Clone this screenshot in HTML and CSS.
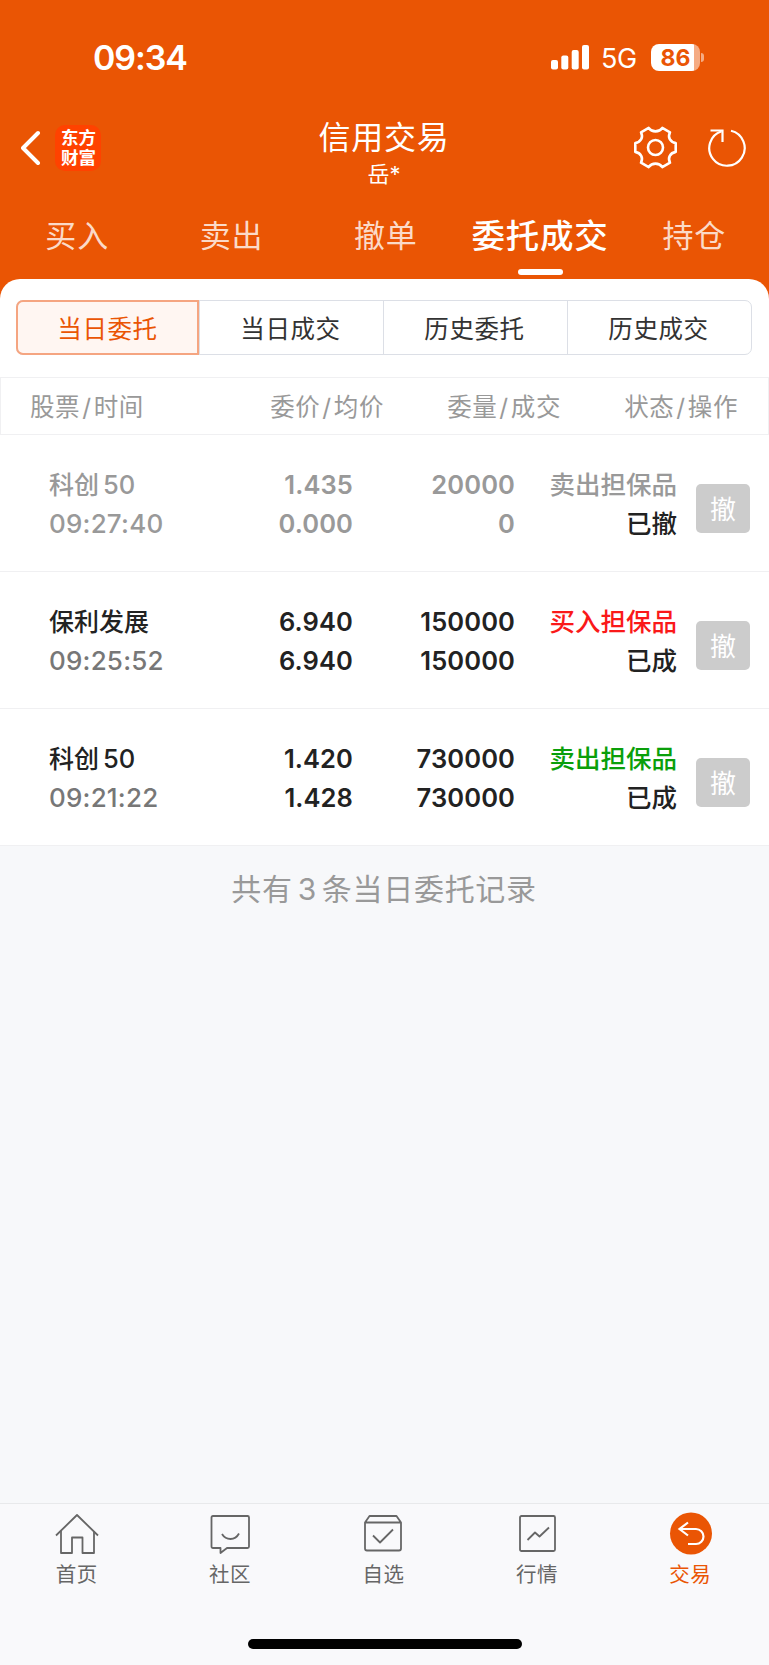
FILE: index.html
```
<!DOCTYPE html>
<html lang="zh-CN">
<head>
<meta charset="UTF-8">
<meta name="viewport" content="width=device-width, initial-scale=1">
<title>信用交易</title>
<link rel="stylesheet" href="styles.css">
</head>
<body>

<header class="header">
  <div class="status-bar">
    <span class="time">09:34</span>
    <div class="status-icons">
      <svg class="signal" width="38" height="25" viewBox="0 0 38 25" fill="#fff">
        <rect x="0" y="15" width="7" height="9.5" rx="2"/>
        <rect x="10.3" y="10.5" width="7" height="14" rx="2"/>
        <rect x="20.7" y="5" width="7" height="19.5" rx="2"/>
        <rect x="31" y="0" width="7" height="24.5" rx="2"/>
      </svg>
      <span class="network">5G</span>
      <div class="battery">86</div>
      <span class="battery-cap"></span>
    </div>
  </div>

  <div class="navbar">
    <div class="nav-left">
      <svg width="20" height="36" viewBox="0 0 20 36" fill="none" stroke="#fff" stroke-width="4" stroke-linecap="round" stroke-linejoin="round">
        <path d="M17 3 L2 18 L17 33"/>
      </svg>
      <div class="logo">东方<br>财富</div>
    </div>
    <div class="nav-title">
      <h1>信用交易</h1>
      <p>岳*</p>
    </div>
    <div class="nav-right">
      <svg width="46" height="46" viewBox="-22.5 -22.5 46 46" fill="none" stroke="#fff" stroke-width="2.6" stroke-linejoin="round">
        <path d="M20.2 -4.4 V4.4 C14.5 5.5 12 10 14.500 15.200 L6.800 19.600 C3.500 15 -3.500 15 -6.800 19.600 L-14.500 15.200 C-12 10 -14.500 5.500 -20.200 4.400 V-4.400 C-14.500 -5.500 -12 -10 -14.500 -15.200 L-6.800 -19.600 C-3.500 -15 3.500 -15 6.800 -19.600 L14.500 -15.200 C12 -10 14.500 -5.500 20.200 -4.400 Z"/>
        <circle r="7.5"/>
      </svg>
      <svg width="40" height="42" viewBox="-20 -21 40 42" fill="none" stroke="#fff" stroke-width="2.2">
        <path d="M4 -17.2 A17.7 17.7 0 1 1 -5.5 -16.8"/>
        <path d="M-16.5 -17.5 H-4.5 V-6"/>
      </svg>
    </div>
  </div>

  <nav class="tabs">
    <a>买入</a>
    <a>卖出</a>
    <a>撤单</a>
    <a class="active">委托成交</a>
    <a>持仓</a>
  </nav>
</header>

<main class="content">
  <section class="panel">
    <div class="segments">
      <a class="selected">当日委托</a>
      <a>当日成交</a>
      <a>历史委托</a>
      <a>历史成交</a>
    </div>

    <div class="table-head">
      <span>股票<i>/</i>时间</span>
      <span>委价<i>/</i>均价</span>
      <span>委量<i>/</i>成交</span>
      <span>状态<i>/</i>操作</span>
    </div>

    <div class="order cancelled">
      <div class="stock"><b>科创<em>50</em></b><span class="clock">09:27:40</span></div>
      <div class="num">1.435<br>0.000</div>
      <div class="num">20000<br>0</div>
      <div class="state">卖出担保品<br><span>已撤</span></div>
      <button>撤</button>
    </div>

    <div class="order">
      <div class="stock"><b>保利发展</b><span class="clock">09:25:52</span></div>
      <div class="num">6.940<br>6.940</div>
      <div class="num">150000<br>150000</div>
      <div class="state buy">买入担保品<br><span>已成</span></div>
      <button>撤</button>
    </div>

    <div class="order">
      <div class="stock"><b>科创<em>50</em></b><span class="clock">09:21:22</span></div>
      <div class="num">1.420<br>1.428</div>
      <div class="num">730000<br>730000</div>
      <div class="state sell">卖出担保品<br><span>已成</span></div>
      <button>撤</button>
    </div>
  </section>

  <p class="summary">共有<em>3</em>条当日委托记录</p>
</main>

<footer class="footer">
  <nav class="tabbar">
    <a>
      <svg viewBox="0 0 44 44">
        <path d="M1 23.5 L22 3 L43 23.5"/>
        <path d="M6 19 V41 H17 V25.5 H27.5 V41 H39 V19"/>
      </svg>
      首页
    </a>
    <a>
      <svg viewBox="0 0 44 44">
        <path d="M5 4 H39.5 Q41 4 41 5.5 V34.5 Q41 36 39.5 36 H19 L12.5 41 V36 H5 Q3.5 36 3.5 34.5 V5.5 Q3.5 4 5 4 Z"/>
        <path d="M14 22 Q17 27 22.5 27 T31 21.5"/>
      </svg>
      社区
    </a>
    <a>
      <svg viewBox="0 0 44 44">
        <path d="M4 10.5 L8.5 4 H35.5 L40 10.5 V36.5 Q40 38.5 38 38.5 H6 Q4 38.5 4 36.5 Z M4 10.5 H40"/>
        <path d="M12 23.5 L19 30.5 L32 17.5"/>
      </svg>
      自选
    </a>
    <a>
      <svg viewBox="0 0 44 44">
        <rect x="5" y="4" width="35" height="35" rx="1.5"/>
        <path d="M12.5 28 L20 20.5 L24.5 24.5 L34 15.5"/>
      </svg>
      行情
    </a>
    <a class="current">
      <svg viewBox="0 0 44 44">
        <circle cx="23" cy="21.5" r="21"/>
        <path d="M20 10.5 L11.5 17 L20 23.5 M11.5 17 H28 A7.5 7.5 0 0 1 28 32 H20"/>
      </svg>
      交易
    </a>
  </nav>
  <div class="home-indicator"></div>
</footer>

</body>
</html>
```
FILE: styles.css
```
* {
  box-sizing: border-box;
}

body {
  margin: 0;
  width: 769px;
  height: 1665px;
  display: flex;
  flex-direction: column;
  font-family: Inter, "Noto Sans CJK SC", sans-serif;
  background: #f7f8fa;
  color: #222;
  overflow: hidden;
}

h1,
p {
  margin: 0;
  font-weight: 400;
}

i,
em {
  font-style: normal;
}

svg {
  display: block;
  flex: none;
}

/* Header */
.header {
  height: 299px;
  flex: none;
  background: #ea5504;
  color: #fff;
}

.status-bar {
  height: 115px;
  padding: 0 65px 0 93px;
  display: flex;
  justify-content: space-between;
  align-items: center;
}

.time {
  font-size: 34px;
  font-weight: 600;
  letter-spacing: -1.1px;
}

.status-icons {
  display: flex;
  align-items: center;
}

.network {
  margin-left: 12px;
  width: 38px;
  padding-top: 1px;
  font-size: 27px;
  letter-spacing: -0.3px;
}

.battery {
  width: 49px;
  height: 27px;
  margin-left: 12px;
  border-radius: 8px;
  background: linear-gradient(to right, #fff 43px, #f5ab83 43px);
  color: #ea5504;
  font-size: 23px;
  font-weight: 700;
  line-height: 28px;
  text-align: center;
}

.battery-cap {
  width: 3px;
  height: 9px;
  margin-left: 1px;
  border-radius: 0 4px 4px 0;
  background: #f5ab83;
}

.navbar {
  height: 85px;
  padding: 1px 22px 0 21px;
  display: grid;
  grid-template-columns: 1fr auto 1fr;
}

.nav-left,
.nav-right {
  height: 64px;
  display: flex;
  align-items: center;
}

.nav-left {
  gap: 14px;
}

.nav-right {
  justify-content: flex-end;
  gap: 28px;
}

.logo {
  width: 46px;
  height: 46px;
  padding: 3px 0 0 1px;
  border-radius: 10px;
  background: #ff4200;
  font-size: 17.5px;
  font-weight: 700;
  line-height: 20px;
  text-align: center;
}

.nav-title {
  text-align: center;
}

.nav-title h1 {
  font-size: 32px;
  line-height: 44px;
  letter-spacing: 0.7px;
}

.nav-title p {
  font-size: 22px;
  line-height: 29px;
}

.tabs {
  display: grid;
  grid-template-columns: repeat(5, 154.3px);
  height: 79px;
}

.tabs a {
  display: flex;
  flex-direction: column;
  align-items: center;
  font-size: 31px;
  line-height: 72px;
  letter-spacing: 0.8px;
  white-space: nowrap;
  color: #fbdac8;
}

.tabs .active {
  font-size: 33.5px;
  font-weight: 500;
  color: #fff;
}

.tabs .active::after {
  content: "";
  width: 45px;
  height: 6px;
  margin-top: -3px;
  border-radius: 3px;
  background: #fff;
}

/* Orders */
.content {
  flex: 1;
  margin-top: -20px;
}

.panel {
  background: #fff;
  border-radius: 20px 20px 0 0;
  padding-top: 21px;
}

.segments {
  height: 55px;
  margin: 0 17px 22px 16px;
  display: grid;
  grid-template-columns: 182px 184px 184px 1fr;
  border: 1px solid #dcdfe6;
  border-radius: 7px;
}

.segments a {
  height: 53px;
  padding-right: 2px;
  border-left: 1px solid #dcdfe6;
  font-size: 24.5px;
  line-height: 56px;
  letter-spacing: 0.6px;
  text-align: center;
  color: #333;
}

.segments .selected {
  height: 55px;
  margin: -1px 0 -1px -1px;
  padding-right: 0;
  border: 2px solid #f5a581;
  border-radius: 7px 0 0 7px;
  background: #fff6f2;
  color: #ea5504;
  line-height: 54px;
}

.table-head {
  height: 58px;
  padding: 0 30px 0 29px;
  display: grid;
  grid-template-columns: 114px 240px 177px 1fr;
  border: 1px solid #f0f0f2;
  font-size: 24.5px;
  line-height: 58px;
  letter-spacing: 0.6px;
  text-align: right;
  white-space: nowrap;
  color: #999;
}

.table-head span:first-child {
  text-align: left;
}

.table-head i {
  margin: 0 2px;
}

.order {
  height: 137px;
  padding: 2px 19px 0 49px;
  display: grid;
  grid-template-columns: 150px 154px 162px 162px 54px;
  align-items: center;
  border-bottom: 1px solid #f0f0f2;
  font-size: 25.5px;
  font-weight: 500;
  line-height: 39px;
  text-align: right;
}

.stock {
  text-align: left;
}

.stock b {
  display: block;
  font-size: 25px;
  font-weight: 500;
}

.stock em {
  margin-left: 4px;
  font-size: 25.5px;
}

.clock {
  display: block;
  margin-top: -1px;
  font-size: 26px;
  letter-spacing: 0.2px;
  color: #777;
}

.num {
  font-weight: 600;
  letter-spacing: 0.1px;
}

.buy {
  color: #fa1919;
}

.sell {
  color: #0a9f0a;
}

.state span {
  color: #222;
}

.cancelled,
.cancelled .clock {
  color: #999;
}

.order button {
  width: 54px;
  height: 49px;
  margin: 8px 0 0 19px;
  padding: 0 0 2px;
  border: 0;
  border-radius: 5px;
  background: #ccc;
  color: #fff;
  font-family: inherit;
  font-size: 26px;
}

.summary {
  margin-top: 21px;
  padding-right: 1px;
  font-size: 30px;
  line-height: 44px;
  letter-spacing: 0.7px;
  text-align: center;
  color: #999;
}

.summary em {
  margin: 0 5px;
}

/* Bottom bar */
.footer {
  height: 162px;
  flex: none;
  border-top: 1px solid #e8e9eb;
  background: #f9f9fb;
}

.tabbar {
  height: 135px;
  padding: 8px 2px 0 0;
  display: grid;
  grid-template-columns: repeat(5, 1fr);
}

.tabbar a {
  display: flex;
  flex-direction: column;
  align-items: center;
  font-size: 20.5px;
  line-height: 38px;
  letter-spacing: 0.5px;
  color: #666;
}

.tabbar svg {
  width: 44px;
  height: 44px;
  fill: none;
  stroke: #666;
  stroke-width: 1.8;
  stroke-linejoin: round;
}

.tabbar .current {
  color: #ea5504;
}

.tabbar .current svg {
  stroke: #fff;
  stroke-width: 2.2;
  stroke-linejoin: miter;
}

.tabbar .current circle {
  fill: #ea5504;
  stroke: none;
}

.home-indicator {
  width: 274px;
  height: 10px;
  margin: 0 auto;
  border-radius: 5px;
  background: #000;
}
```
